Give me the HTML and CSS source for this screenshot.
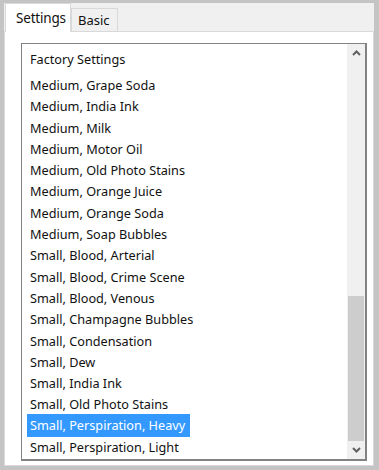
FILE: index.html
```html
<!DOCTYPE html>
<html>
<head>
<meta charset="utf-8">
<link rel="stylesheet" href="styles.css">
</head>
<body>
<div class="window">
  <div class="tabs">
    <div class="tab active">Settings</div>
    <div class="tab">Basic</div>
    <div class="tab-fill"></div>
  </div>
  <div class="panel">
    <div class="listbox">
      <ul class="items">
        <li class="item first">Factory Settings</li>
        <li class="item">Medium, Grape Soda</li>
        <li class="item">Medium, India Ink</li>
        <li class="item">Medium, Milk</li>
        <li class="item">Medium, Motor Oil</li>
        <li class="item">Medium, Old Photo Stains</li>
        <li class="item">Medium, Orange Juice</li>
        <li class="item">Medium, Orange Soda</li>
        <li class="item">Medium, Soap Bubbles</li>
        <li class="item">Small, Blood, Arterial</li>
        <li class="item">Small, Blood, Crime Scene</li>
        <li class="item">Small, Blood, Venous</li>
        <li class="item">Small, Champagne Bubbles</li>
        <li class="item">Small, Condensation</li>
        <li class="item">Small, Dew</li>
        <li class="item">Small, India Ink</li>
        <li class="item">Small, Old Photo Stains</li>
        <li class="item selected">Small, Perspiration, Heavy</li>
        <li class="item">Small, Perspiration, Light</li>
      </ul>
      <div class="scrollbar">
        <div class="arrow">
          <svg width="9" height="6" viewBox="0 0 9 6"><path d="M1 5 L4.5 1.5 L8 5" fill="none" stroke="#606060" stroke-width="2"/></svg>
        </div>
        <div class="track">
          <div class="thumb"></div>
        </div>
        <div class="arrow">
          <svg width="9" height="6" viewBox="0 0 9 6"><path d="M1 1 L4.5 4.5 L8 1" fill="none" stroke="#606060" stroke-width="2"/></svg>
        </div>
      </div>
    </div>
  </div>
</div>
</body>
</html>
```

FILE: styles.css
```css
html, body {
  margin: 0;
  padding: 0;
}
body {
  background: #c4c4c4;
  width: 379px;
  height: 470px;
  box-sizing: border-box;
  padding: 3px 5px 4px 4px;
  font-family: "Noto Sans", "Liberation Sans", sans-serif;
  font-size: 12.7px;
  color: #111;
}
.window {
  height: 463px;
  background: #f0f0f0;
  display: flex;
  flex-direction: column;
}
.tabs {
  display: flex;
  align-items: flex-end;
  height: 28px;
  flex: none;
  padding-left: 1px;
  position: relative;
  z-index: 1;
}
.tab {
  box-sizing: border-box;
  height: 23px;
  width: 47px;
  border: 1px solid #d9d9d9;
  border-bottom: none;
  background: #f0f0f0;
  padding: 2px 0 0 6px;
  font-size: 13px;
}
.tab.active {
  height: 29px;
  width: 66px;
  background: #fff;
  margin-bottom: -1px;
  padding: 5px 0 0 10px;
  font-size: 13.5px;
  letter-spacing: -0.2px;
}
.tab-fill {
  flex: 1;
}
.panel {
  flex: 1;
  background: #fff;
  border: 1px solid #d9d9d9;
  padding: 11px 6px 4px 16px;
  display: flex;
}
.listbox {
  flex: 1;
  display: flex;
  border: 1px solid #828282;
  border-right-width: 2px;
  border-bottom-width: 2px;
  background: #fff;
  overflow: hidden;
}
.items {
  list-style: none;
  margin: 0;
  padding: 5px 0 0 5px;
  flex: 1;
}
.item {
  height: 21.3px;
  line-height: 21.3px;
  padding-left: 3px;
  white-space: nowrap;
}
.item.first {
  height: 26px;
  line-height: 20px;
}
.item.selected {
  background: #3399ff;
  color: #fff;
  width: 160px;
  height: 23px;
  line-height: 23px;
  margin: -2px 0 0;
}
.scrollbar {
  width: 18px;
  flex: none;
  background: #f0f0f0;
  display: flex;
  flex-direction: column;
}
.arrow {
  height: 18px;
  flex: none;
  display: flex;
  align-items: center;
  justify-content: center;
}
.track {
  flex: 1;
  display: flex;
  flex-direction: column;
  justify-content: flex-end;
}
.thumb {
  height: 145px;
  background: #cdcdcd;
  margin: 0 1px;
}
```
